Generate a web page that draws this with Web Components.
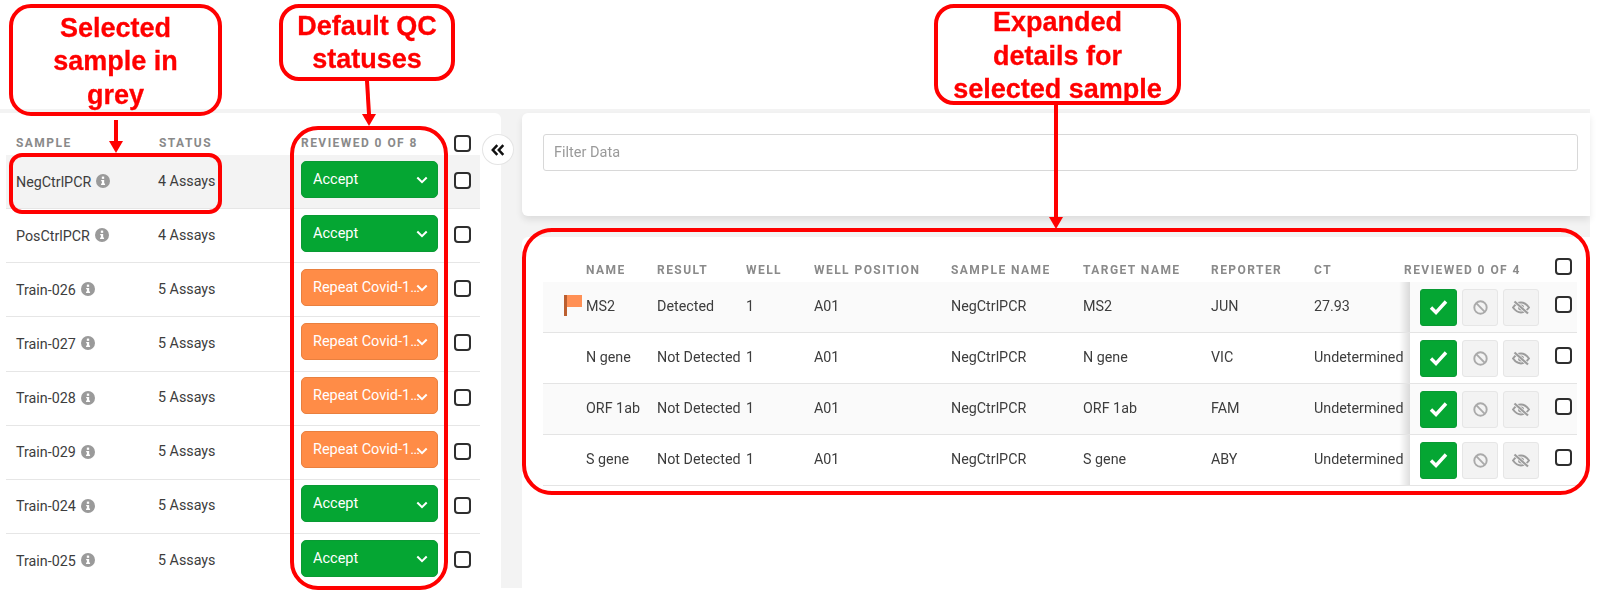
<!DOCTYPE html>
<html>
<head>
<meta charset="utf-8">
<title>QC review</title>
<style>
  html, body { margin: 0; background: #fff; }
  body { font-family: Roboto, "Liberation Sans", sans-serif; color: #3d3d3d; font-size: 14.3px; }
</style>
</head>
<body>
<review-page>
  <sample-panel reviewed="Reviewed 0 of 8">
    <sample-row name="NegCtrlPCR" status="4 Assays" qc="accept" selected></sample-row>
    <sample-row name="PosCtrlPCR" status="4 Assays" qc="accept"></sample-row>
    <sample-row name="Train-026" status="5 Assays" qc="repeat"></sample-row>
    <sample-row name="Train-027" status="5 Assays" qc="repeat"></sample-row>
    <sample-row name="Train-028" status="5 Assays" qc="repeat"></sample-row>
    <sample-row name="Train-029" status="5 Assays" qc="repeat"></sample-row>
    <sample-row name="Train-024" status="5 Assays" qc="accept"></sample-row>
    <sample-row name="Train-025" status="5 Assays" qc="accept"></sample-row>
  </sample-panel>
  <filter-card placeholder="Filter Data"></filter-card>
  <detail-card reviewed="Reviewed 0 of 4">
    <detail-row flagged striped cells="MS2|Detected|1|A01|NegCtrlPCR|MS2|JUN|27.93"></detail-row>
    <detail-row cells="N gene|Not Detected|1|A01|NegCtrlPCR|N gene|VIC|Undetermined"></detail-row>
    <detail-row striped cells="ORF 1ab|Not Detected|1|A01|NegCtrlPCR|ORF 1ab|FAM|Undetermined"></detail-row>
    <detail-row cells="S gene|Not Detected|1|A01|NegCtrlPCR|S gene|ABY|Undetermined"></detail-row>
  </detail-card>
  <call-out slot="notes" box="9,4,213,112" radius="22" drop="4">Selected<br>sample in<br>grey</call-out>
  <call-out slot="notes" box="279,4,176,77" radius="20" drop="1">Default QC<br>statuses</call-out>
  <call-out slot="notes" box="934,4,247,101" radius="20" drop="4">Expanded<br>details for<br>selected sample</call-out>
  <call-out slot="notes" box="9,153,213,61" radius="13"></call-out>
  <call-out slot="notes" box="290,126,158,464" radius="28"></call-out>
  <call-out slot="notes" box="522,228,1068,267" radius="30"></call-out>
  <call-arrow slot="notes" from="116,120" to="116,153"></call-arrow>
  <call-arrow slot="notes" from="367,81" to="369,126"></call-arrow>
  <call-arrow slot="notes" from="1056,105" to="1056,229"></call-arrow>
</review-page>

<script>
const headerText = `
  font: 700 12px Roboto, "Liberation Sans", sans-serif;
  letter-spacing: 1.45px;
  text-transform: uppercase;
  color: #8a8a8a;
  white-space: nowrap;
`

const icons = {
  info: `<svg width="14" height="14" viewBox="0 0 13 13"><circle cx="6.5" cy="6.5" r="6.5" fill="#9a9a9a"/><rect x="5.4" y="2.4" width="2.2" height="2.1" fill="#fff"/><path d="M4.8 5.5h2.8v3.4h.8v1.2H4.700V8.900h.8V6.700h-.7z" fill="#fff"/></svg>`,
  chevron: `<svg width="12" height="8" viewBox="0 0 12 8"><path d="M1.3 1.5 6 6.2l4.7-4.7" fill="none" stroke="#fff" stroke-width="2"/></svg>`,
  check: `<svg width="19" height="16" viewBox="0 0 19 16"><path d="M2 8.500 7 13.500 17 2.500" fill="none" stroke="#fff" stroke-width="3.400"/></svg>`,
  ban: `<svg width="15" height="15" viewBox="0 0 15 15"><circle cx="7.500" cy="7.500" r="6.200" fill="none" stroke="#aaa" stroke-width="1.900"/><path d="M3.200 3.200l8.600 8.600" stroke="#aaa" stroke-width="1.900"/></svg>`,
  eyeOff: `<svg width="18" height="15" viewBox="0 0 18 15"><path d="M1 7.500C4 3.500 7 2.600 9 2.600S14 3.500 17 7.500C14 11.500 11 12.400 9 12.400S4 11.500 1 7.500Z" fill="none" stroke="#9c9c9c" stroke-width="2"/><circle cx="9" cy="7.500" r="3" fill="#9c9c9c"/><path d="M2.500 1.500 16 13.500" stroke="#f3f3f3" stroke-width="3.600"/><path d="M2.500 1.500 16 13.500" stroke="#9c9c9c" stroke-width="2.200"/></svg>`,
  collapse: `<svg width="14" height="12" viewBox="0 0 14 12"><path d="M6.300 1.200 1.800 6l4.500 4.800M12.300 1.200 7.800 6l4.500 4.800" fill="none" stroke="#111" stroke-width="2.500"/></svg>`
}

class QcCheck extends HTMLElement {
  constructor() {
    super()
    this.attachShadow({mode: 'open'})
    this.shadowRoot.innerHTML = `
      <style>
        :host {
          display: block;
          box-sizing: border-box;
          width: 17px;
          height: 17px;
          border: 2px solid #2e2e2e;
          border-radius: 4px;
          background: #fff;
        }
      </style>
    `
  }
}

class QcSelect extends HTMLElement {
  constructor() {
    super()
    this.attachShadow({mode: 'open'})
  }

  connectedCallback() {
    const repeat = this.getAttribute('qc') === 'repeat'
    this.shadowRoot.innerHTML = `
      <style>
        :host {
          display: flex;
          align-items: center;
          box-sizing: border-box;
          width: 137px;
          height: 37px;
          padding: 0 10px 0 11px;
          border: 1px solid ${repeat ? '#e9803f' : '#0a9a34'};
          border-radius: 5px;
          background: ${repeat ? '#ff8c47' : '#05a633'};
          color: #fff;
          font-size: 14.500px;
        }
        span {
          flex: none;
          width: ${repeat ? '108px' : '92px'};
          overflow: hidden;
          text-overflow: ellipsis;
          white-space: nowrap;
        }
        svg { flex: none; margin: 2px 0 0 ${repeat ? '-5px' : '11px'}; }
      </style>
      <span>${repeat ? 'Repeat Covid-19 Test' : 'Accept'}</span>
      ${icons.chevron}
    `
  }
}

class SampleRow extends HTMLElement {
  constructor() {
    super()
    this.attachShadow({mode: 'open'})
  }

  connectedCallback() {
    this.shadowRoot.innerHTML = `
      <style>
        :host {
          display: grid;
          grid-template-columns: 143px 142px 137px 17px;
          align-items: center;
          box-sizing: border-box;
          height: 54.140px;
          padding-left: 10px;
          border-bottom: 1.500px solid #e6e6e6;
          background: ${this.hasAttribute('selected') ? '#f3f3f3' : '#fff'};
        }
        :host(:last-child) { border-bottom: 0; }
        .name { display: flex; align-items: center; gap: 5px; }
        .name svg { margin-top: -1px; }
        .status { margin: -2px 0 0 -1px; }
        qc-select { margin-top: -5px; }
        qc-check { margin: -2px 0 0 16px; }
      </style>
      <div class="name">${this.getAttribute('name')} ${icons.info}</div>
      <div class="status">${this.getAttribute('status')}</div>
      <qc-select qc="${this.getAttribute('qc')}"></qc-select>
      <qc-check></qc-check>
    `
  }
}

class SamplePanel extends HTMLElement {
  constructor() {
    super()
    this.attachShadow({mode: 'open'})
  }

  connectedCallback() {
    this.shadowRoot.innerHTML = `
      <style>
        :host {
          display: block;
          box-sizing: border-box;
          height: 475px;
          padding: 0 21px 0 6px;
          background: #fff;
          border-top-right-radius: 6px;
        }
        .head {
          display: grid;
          grid-template-columns: 143px 143px 137px 17px;
          align-items: center;
          box-sizing: border-box;
          height: 42px;
          padding: 17px 0 0 10px;
          ${headerText}
        }
        .head span:nth-child(3) { margin-left: -1px; }
        qc-check { margin: 1px 0 0 15px; }
      </style>
      <div class="head">
        <span>Sample</span>
        <span>Status</span>
        <span>${this.getAttribute('reviewed')}</span>
        <qc-check></qc-check>
      </div>
      <slot></slot>
    `
  }
}

class FilterCard extends HTMLElement {
  constructor() {
    super()
    this.attachShadow({mode: 'open'})
  }

  connectedCallback() {
    this.shadowRoot.innerHTML = `
      <style>
        :host {
          display: block;
          box-sizing: border-box;
          height: 103px;
          padding: 21px 12px 0 21px;
          background: #fff;
          border-radius: 6px 0 0 6px;
          box-shadow: 0 4px 7px rgba(0, 0, 0, .09);
        }
        .field {
          display: flex;
          align-items: center;
          box-sizing: border-box;
          height: 37px;
          padding: 0 10px 1px;
          border: 1.500px solid #d8d8d8;
          border-radius: 3px;
          color: #9a9a9a;
          font-size: 14.500px;
        }
      </style>
      <div class="field">${this.getAttribute('placeholder')}</div>
    `
  }
}

const detailColumns = '43px 71px 89px 68px 137px 132px 128px 103px 96px 146px 21px'

class DetailRow extends HTMLElement {
  constructor() {
    super()
    this.attachShadow({mode: 'open'})
  }

  connectedCallback() {
    const cells = this.getAttribute('cells').split('|')
    const flag = this.hasAttribute('flagged')
      ? `<svg width="18" height="21" viewBox="0 0 18 21"><rect x="3" y="0" width="15" height="12" fill="#ff9055"/><rect x="0" y="0" width="3" height="21" fill="#bb5f30"/></svg>`
      : ''
    this.shadowRoot.innerHTML = `
      <style>
        :host {
          display: grid;
          grid-template-columns: ${detailColumns};
          align-items: center;
          box-sizing: border-box;
          height: 51px;
          border-bottom: 1.500px solid #e4e4e4;
          background: ${this.hasAttribute('striped') ? '#fafafa' : '#fff'};
          white-space: nowrap;
        }
        .flag { padding-left: 21px; display: flex; margin-top: -3px; }
        .text { margin-top: -2px; }
        .actions {
          position: relative;
          align-self: stretch;
          display: flex;
          align-items: center;
          gap: 5px;
          padding-left: 10px;
        }
        .actions::before {
          content: "";
          position: absolute;
          left: -11px;
          top: 0;
          bottom: 0;
          width: 11px;
          background: linear-gradient(to right, rgba(0,0,0,0), rgba(0,0,0,.13));
        }
        .btn {
          display: flex;
          align-items: center;
          justify-content: center;
          box-sizing: border-box;
          width: 36px;
          height: 37px;
          margin-top: 1px;
          border: 1.500px solid #e6e6e6;
          border-radius: 3px;
          background: #f3f3f3;
        }
        .btn.on { width: 37px; background: #05a633; border-color: #0a9a34; }
        qc-check { margin: -4px 0 0 -1px; }
      </style>
      <div class="flag">${flag}</div>
      ${cells.map(cell => `<div class="text">${cell}</div>`).join('')}
      <div class="actions">
        <div class="btn on">${icons.check}</div>
        <div class="btn">${icons.ban}</div>
        <div class="btn">${icons.eyeOff}</div>
      </div>
      <qc-check></qc-check>
    `
  }
}

class DetailCard extends HTMLElement {
  constructor() {
    super()
    this.attachShadow({mode: 'open'})
  }

  connectedCallback() {
    const titles = ['', 'Name', 'Result', 'Well', 'Well Position', 'Sample Name', 'Target Name', 'Reporter', 'CT']
    this.shadowRoot.innerHTML = `
      <style>
        :host {
          display: block;
          flex: 1;
          box-sizing: border-box;
          padding: 0 13px 0 21px;
          background: #fff;
          border-top-left-radius: 6px;
        }
        .head {
          display: grid;
          grid-template-columns: ${detailColumns};
          align-items: center;
          box-sizing: border-box;
          height: 44.500px;
          padding-top: 22px;
          ${headerText}
        }
        .reviewed { margin-left: -6px; }
        qc-check { margin: -8px 0 0 -1px; }
      </style>
      <div class="head">
        ${titles.map(title => `<span>${title}</span>`).join('')}
        <span class="reviewed">${this.getAttribute('reviewed')}</span>
        <qc-check></qc-check>
      </div>
      <slot></slot>
    `
  }
}

// annotations drawn on top of the screenshot
class CallOut extends HTMLElement {
  constructor() {
    super()
    this.attachShadow({mode: 'open'})
  }

  connectedCallback() {
    const [x, y, w, h] = this.getAttribute('box').split(',')
    this.shadowRoot.innerHTML = `
      <style>
        :host {
          position: absolute;
          left: ${x}px;
          top: ${y}px;
          width: ${w}px;
          height: ${h}px;
          box-sizing: border-box;
          display: flex;
          align-items: center;
          justify-content: center;
          padding-top: ${this.getAttribute('drop') || 0}px;
          border: 4.500px solid #ff0000;
          border-radius: ${this.getAttribute('radius')}px;
          color: #ff0000;
          font: 700 27px/33.500px "Liberation Sans", Arial, sans-serif;
          -webkit-text-stroke: .3px #ff0000;
          text-align: center;
        }
      </style>
      <div><slot></slot></div>
    `
  }
}

class CallArrow extends HTMLElement {
  constructor() {
    super()
    this.attachShadow({mode: 'open'})
  }

  connectedCallback() {
    const [x1, y1] = this.getAttribute('from').split(',').map(Number)
    const [x2, y2] = this.getAttribute('to').split(',').map(Number)
    const headY = y2 - 12
    this.shadowRoot.innerHTML = `
      <style>
        :host { position: absolute; left: 0; top: 0; }
        svg { display: block; overflow: visible; }
      </style>
      <svg width="1" height="1">
        <line x1="${x1}" y1="${y1}" x2="${x2}" y2="${headY}" stroke="#ff0000" stroke-width="4"/>
        <polygon points="${x2 - 7},${headY} ${x2 + 7},${headY} ${x2},${y2}" fill="#ff0000"/>
      </svg>
    `
  }
}

class ReviewPage extends HTMLElement {
  constructor() {
    super()
    this.attachShadow({mode: 'open'})
    this.shadowRoot.innerHTML = `
      <style>
        :host {
          display: block;
          position: relative;
          width: 1600px;
          height: 598px;
          overflow: hidden;
          box-sizing: border-box;
          padding-top: 109px;
          filter: blur(.3px);
        }
        .stage {
          display: grid;
          grid-template-columns: 501px 1068px;
          column-gap: 21px;
          width: 1590px;
          height: 479px;
          box-sizing: border-box;
          padding-top: 4px;
          background: #f3f3f3;
        }
        .right { display: flex; flex-direction: column; gap: 21px; }
        .collapse {
          position: absolute;
          left: 482px;
          top: 134px;
          width: 32px;
          height: 31px;
          box-sizing: border-box;
          display: flex;
          align-items: center;
          justify-content: center;
          border: 1px solid #e4e4e4;
          border-radius: 50%;
          background: #fff;
        }
      </style>
      <div class="stage">
        <slot></slot>
        <div class="right"><slot name="right"></slot></div>
      </div>
      <div class="collapse">${icons.collapse}</div>
      <slot name="notes"></slot>
    `
  }

  connectedCallback() {
    this.querySelectorAll('filter-card, detail-card').forEach(el => el.setAttribute('slot', 'right'))
  }
}

customElements.define('qc-check', QcCheck)
customElements.define('qc-select', QcSelect)
customElements.define('sample-row', SampleRow)
customElements.define('sample-panel', SamplePanel)
customElements.define('filter-card', FilterCard)
customElements.define('detail-row', DetailRow)
customElements.define('detail-card', DetailCard)
customElements.define('call-out', CallOut)
customElements.define('call-arrow', CallArrow)
customElements.define('review-page', ReviewPage)
</script>
</body>
</html>
